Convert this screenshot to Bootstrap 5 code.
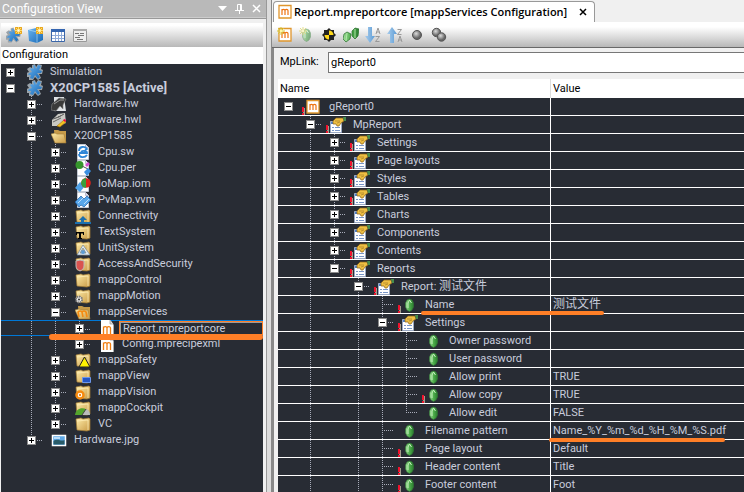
<!DOCTYPE html>
<html lang="en">
<head>
<meta charset="utf-8">
<meta name="viewport" content="width=device-width, initial-scale=1">
<title>Configuration View</title>
<link href="https://cdn.jsdelivr.net/npm/bootstrap@5.3.0/dist/css/bootstrap.min.css" rel="stylesheet">
<style>
:root { --ink: #c8ccdc; --night: #282c34; --mark: #ff7f27; }
body { font: 11px/16px Roboto, "Noto Sans CJK SC", sans-serif; background: #f0f0f0; color: #000; }
svg { display: block; flex: none; }
.side { width: 267px; flex: none; border-right: 1px solid #999; }
.side-title { height: 18px; background: #b9b9b9; border-bottom: 1px solid #ccc; color: #fff; font: 12px/16px Roboto, sans-serif; padding: 0 5px 0 2px; }
.side-title button, .tools button, .tab-close { border: 0; background: none; padding: 0; color: inherit; }
.side-body { border-top: 1px solid #999; padding: 4px 3px 0 1px; }
.tools { height: 24px; flex: none; background: linear-gradient(#fff 10%, #b8b8b8); padding-left: 5px; gap: 6px; }
.side-head { height: 17px; background: #fff; padding-left: 1px; }
.tree { background: var(--night); color: var(--ink); }
.line { height: 16px; display: flex; align-items: center; white-space: nowrap; }
.line b { font-size: 13px; }
.c, .c0 { width: 24px; flex: none; align-self: stretch; display: flex; justify-content: center; align-items: center; }
.side .c0 { width: 18px; }
.grid .c0 { width: 20px; }
.v, .t, .l { --d: repeating-linear-gradient(#a9adba 0 1px, transparent 1px 2px); --h: repeating-linear-gradient(90deg, #a9adba 0 1px, transparent 1px 2px); background-repeat: no-repeat; }
.v { background-image: var(--d); background-size: 1px 100%; background-position: 12px 0; }
.t { background-image: var(--d), var(--h); background-size: 1px 100%, 12px 1px; background-position: 12px 0, 12px 8px; }
.l { background-image: var(--d), var(--h); background-size: 1px 9px, 12px 1px; background-position: 12px 0, 12px 8px; }
.x { width: 9px; height: 9px; padding: 0; border: 1px solid #8c8c8c; border-radius: 0; background: linear-gradient(#000, #000) center/5px 1px no-repeat #fff; }
.x.plus { background: linear-gradient(#000, #000) center/5px 1px no-repeat, linear-gradient(#000, #000) center/1px 5px no-repeat, #fff; }
.f { width: 8px; flex: none; align-self: stretch; padding: 9px 0 0 4px; }
.line > svg { width: 16px; height: 16px; margin-right: 7px; }
.cjk { font-size: 12px; }
.picked { position: relative; border-block: 1px solid #0078d7; }
.picked .name { flex: 1; align-self: stretch; border: 1px solid var(--mark); box-shadow: inset 1px 1px #9a9a9a; margin-left: -3px; padding-left: 3px; line-height: 14px; }
.stroke { position: absolute; background: var(--mark); height: 4px; border-radius: 2px; z-index: 1; }
.stroke-side { left: 48px; right: 0; bottom: -5px; height: 6px; border-radius: 3px; }
.stroke-name { left: 143px; width: 183px; bottom: -2px; }
.stroke-value { left: -2px; width: 176px; bottom: -3px; }
.gutter { width: 5px; flex: none; background: #dcdcdc; border-right: 1px solid #888; }
.tabs { height: 22px; flex: none; padding: 1px 0 0 1px; }
.doc-tab { background: #fff; border: 1px solid #999; border-bottom: 0; border-radius: 4px 4px 0 0; padding: 0 7px 0 4px; font: 600 11px/20px "Open Sans", sans-serif; white-space: nowrap; }
.tab-close { margin-left: 12px; }
.doc-tools { height: 26px; background: linear-gradient(#fff 20%, #b8b8b8); border-bottom: 1px solid #696969; }
.editor { border-left: 2px solid #888; padding-left: 4px; min-height: 0; }
.link-row { height: 31px; padding: 0 0 3px 2px; }
.link-row label { width: 48px; }
.link-row input { height: 21px; border: 1px solid #777; border-right: 0; padding: 0 2px; background: #fff; min-width: 0; outline: 0; }
.grid { width: 100%; table-layout: fixed; border-collapse: separate; border-spacing: 0; color: var(--ink); background: var(--night); }
.grid th { height: 19px; padding: 0 2px; font-weight: 400; color: #000; background: #fff; line-height: 18px; }
.grid td { height: 18px; padding: 0; border-bottom: 1px solid #fff; position: relative; line-height: 17px; white-space: nowrap; }
.grid .line { height: 17px; }
.grid th:first-child { width: 273px; border-right: 1px solid #ddd; }
.grid td:first-child { border-right: 1px solid #fff; }
.grid td + td { padding-left: 2px; }
</style>
<script src="https://cdn.jsdelivr.net/npm/bootstrap@5.3.0/dist/js/bootstrap.bundle.min.js"></script>
</head>
<body class="d-flex vh-100 overflow-hidden">
<svg width="0" height="0" class="position-absolute" aria-hidden="true">
<defs>
<linearGradient id="gold" x2="1" y2="1"><stop stop-color="#ffedab"/><stop offset="1" stop-color="#c99a45"/></linearGradient>
<linearGradient id="blue" x2="1" y2="1"><stop stop-color="#6ab4f0"/><stop offset="1" stop-color="#1667b5"/></linearGradient>
<linearGradient id="leaf" x2="1" y2="0"><stop stop-color="#a6e09f"/><stop offset=".5" stop-color="#4fae4c"/><stop offset="1" stop-color="#2b7d30"/></linearGradient>
<radialGradient id="ball" cx=".4" cy=".35"><stop stop-color="#ddd"/><stop offset="1" stop-color="#666"/></radialGradient>
<linearGradient id="arrow"><stop stop-color="#a9cdec"/><stop offset="1" stop-color="#5b9bd5"/></linearGradient>
</defs>
<symbol id="cfg" viewBox="0 0 16 16"><path d="M5 1l3-1 1 3 2-3 4 1-1 4 2 1-1 4-3 0 2 4-3 2-3-3-2 3-4 0 0-3-4 0 1-4 3-1-2-3 3-2 2 1z" fill="#9aa3aa"/><path d="M6 1.500l2 0 1 3.500 2-4 3 1-2 4 3 1-1 2-4 0 3 4-2 2-3-4-2 4-3-1 1-3-3 0 1-2 3-1-2-3 2-1 2 1z" fill="url(#blue)"/></symbol>
<symbol id="spark" viewBox="0 0 8 8"><path d="M0 0h8v8h-8z" fill="#e9a820"/><path d="M4 0v8M0 4h8M1 1l6 6M7 1L1 7" stroke="#ffe680"/><path d="M3 3h2v2h-2z" fill="#fff"/></symbol>
<symbol id="sparkle" viewBox="0 0 8 8"><path d="M4 0v8M0 4h8M1 1l6 6M7 1L1 7" stroke="#d3c932"/><path d="M3 3h2v2h-2z" fill="#fff9a8"/></symbol>
<symbol id="box" viewBox="0 0 16 16"><path d="M0 3l8-2 7 2v10l-6 3-8-2z" fill="url(#blue)"/><path d="M1 3l8 2v11M9 5l6-2" stroke="#bfe2fb" fill="none" stroke-width=".6"/></symbol>
<symbol id="tbl" viewBox="0 0 16 16"><path d="M1.500 2.500h13v12h-13z" fill="#fff" stroke="#3b66a8"/><path d="M1 2h14v3H1z" fill="#3465b0"/><path d="M2 8.500h12M2 11.500h12M5.500 5v9M8.500 5v9M11.500 5v9" stroke="#8eaad8"/></symbol>
<symbol id="txt" viewBox="0 0 16 16"><path d="M1.500 2.500h13v12h-13z" fill="#eee" stroke="#999"/><path d="M1 2h14v2H1z" fill="#aaa"/><path d="M3 6.500h4M8 6.500h4M6 8.500h6M3 10.500h5M5 12.500h6" stroke="#777"/></symbol>
<symbol id="page" viewBox="0 0 16 16"><path d="M2.500 .5h8l3 3v12h-11z" fill="#fff" stroke="#c4cbd5"/><path d="M10.500 .5v3h3" fill="#dde" stroke="#bbc"/></symbol>
<symbol id="fold" viewBox="0 0 16 16"><path d="M1 3l5-1 2 1 6-1 1 1v11l-3 1-10-1z" fill="url(#gold)" stroke="#a37d35" stroke-width=".7"/><path d="M2 5l11-1v10" fill="none" stroke="#fff0bb" stroke-width=".7"/></symbol>
<symbol id="open" viewBox="0 0 16 16"><path d="M3 2l4 0 2 1 6 0v11H4z" fill="#c79b49"/><path d="M0 6l4-1 2 1 7 0 2 9-11 0z" fill="url(#gold)" stroke="#a37d35" stroke-width=".6"/></symbol>
<symbol id="serv" viewBox="0 0 16 16"><use href="#open"/><path d="M4 13L3 8c2-2 3-1 4 0l1 5M7 8c2-2 3-1 4 0l1 5" fill="none" stroke="#f58a10" stroke-width="1.600"/></symbol>
<symbol id="hw" viewBox="0 0 16 16"><path d="M3 1h10l2 14H3z" fill="#dfe2e5"/><path d="M1 8l7-6 7 1-3 6 0 4-3-3-4 5-5-1z" fill="#3a3a3a" stroke="#888" stroke-width=".6"/><path d="M3 8l6-4 4 0" stroke="#999" fill="none"/></symbol>
<symbol id="hwl" viewBox="0 0 16 16"><path d="M1 8l6-6 7-1 1 10-7 3-7 0z" fill="#c9c9c3"/><path d="M2 7l6-2 5-3M2 10l8-4" stroke="#666"/><path d="M6 14l7-6 2 2-6 5z" fill="#f4c320" stroke="#a8740c" stroke-width=".6"/><path d="M12 8l2-1 1 2-1 1z" fill="#e04"/></symbol>
<symbol id="sw" viewBox="0 0 16 16"><use href="#page"/><path d="M4 7c0-5 6-5 8-2l-2 1M4 9h8c0-2-4-3-6-1M4 10c0 4 6 4 8 1" fill="none" stroke="#2f86d6" stroke-width="1.800"/></symbol>
<symbol id="per" viewBox="0 0 16 16"><use href="#page"/><circle cx="4.500" cy="5" r="4" fill="#35962c"/><path d="M7 6l6 3" stroke="#555"/><path d="M10 5l3-3 2 2-3 3z" fill="#d64bd0"/><path d="M9 12l4-4 3 3-4 5z" fill="#3b8fe0"/></symbol>
<symbol id="iom" viewBox="0 0 16 16"><use href="#page"/><path d="M0 12l5-6 5 4-5 6z" fill="#4fa1e6"/><circle cx="11" cy="7" r="4.800" fill="#d9251c"/><path d="M11 2.200a4.800 4.800 0 0 0 0 9.600z" fill="#37a03b"/></symbol>
<symbol id="pvm" viewBox="0 0 16 16"><use href="#page"/><path d="M0 10l6-6 3 3 3-3 4 4-7 7-3-2-2 2z" fill="#58a7ea" stroke="#1d5fa6" stroke-width=".7"/><path d="M3 11l5-5M9 12l5-5" stroke="#b9dcfa"/></symbol>
<symbol id="con" viewBox="0 0 16 16"><use href="#fold"/><path d="M8 8l4 4H9v2h7v2H0v-2h6v-2H4z" fill="#1c6fae"/></symbol>
<symbol id="tex" viewBox="0 0 16 16"><use href="#fold"/><path d="M1 8h8v3H8V9.500H6V14h1v1H3v-1h1V9.500H2V11H1z" fill="#000"/></symbol>
<symbol id="uni" viewBox="0 0 16 16"><use href="#fold"/><path d="M2 15l6-10 7 10zM5 13h6l-3-5z" fill="#e6edf3" stroke="#71869a" stroke-width=".7"/><circle cx="8" cy="12" r="2" fill="#5b9bd5"/></symbol>
<symbol id="sec" viewBox="0 0 16 16"><use href="#fold"/><path d="M1 5l4-1 4 1v5c0 3-2 4-4 5-2-1-4-2-4-5z" fill="#d9534f" stroke="#bbb"/></symbol>
<symbol id="mot" viewBox="0 0 16 16"><use href="#fold"/><circle cx="4" cy="11.500" r="3" fill="#eee" stroke="#777" stroke-width="2" stroke-dasharray="1.500 .8"/><circle cx="4" cy="11.500" r="1" fill="#333"/></symbol>
<symbol id="saf" viewBox="0 0 16 16"><use href="#fold"/><path d="M9.500 5L15 15H4z" fill="#fff200" stroke="#222"/></symbol>
<symbol id="vie" viewBox="0 0 16 16"><use href="#fold"/><path d="M7.500 9.500h8v5h-8z" fill="#2456c5" stroke="#6d96e8"/></symbol>
<symbol id="vis" viewBox="0 0 16 16"><use href="#fold"/><circle cx="5" cy="11" r="3.500" fill="#fff" stroke="#f58a10" stroke-width="2.500"/><circle cx="5" cy="11" r="1.200" fill="#f58a10"/></symbol>
<symbol id="coc" viewBox="0 0 16 16"><use href="#fold"/><path d="M0 15c1-8 11-9 15-2v2z" fill="#54a52d"/><path d="M7 15l4-6c3 1 4 3 4 6z" fill="#bbb"/><path d="M7 15l4-6" stroke="#444"/></symbol>
<symbol id="jpg" viewBox="0 0 16 16"><path d="M1.500 3.500h13v10h-13z" fill="#5fa9e6" stroke="#fff" stroke-width="1.500"/><path d="M2.500 9c5-3 7 1 11-1v4.500h-11z" fill="#295b68"/><path d="M3 6h6" stroke="#d9efff" stroke-width="1.500"/></symbol>
<symbol id="mdoc" viewBox="0 0 16 16"><path d="M4 1h8l3 4v11H4z" fill="#aaa"/><path d="M2 0h9l3 4v12H2z" fill="#fff"/><path d="M11 0v4h3" fill="#ddd" stroke="#888" stroke-width=".6"/><path d="M4.500 14V6.500M4.500 8c0-1.500 3.500-2 3.500 0v6M8 8c0-1.500 3.500-2 3.500 0v6" fill="none" stroke="#f07d10" stroke-width="1.300"/></symbol>
<symbol id="m" viewBox="0 0 16 16"><path d="M1 1.500h12v12.500H1z" fill="#fff" stroke="#e0962d" stroke-width="1.300"/><path d="M4 11V5M4 6.500c0-1.500 3-1.500 3 0V11M7 6.500c0-1.500 3-1.500 3 0V11" fill="none" stroke="#ee7411" stroke-width="1.200"/></symbol>
<symbol id="prop" viewBox="0 0 16 16"><path d="M.5 4.500h11v11H.5z" fill="#fff" stroke="#9aa9c4"/><path d="M1 5h4v2H1z" fill="#4d80cc"/><path d="M2 10.500h2M5 10.500h5M2 13.500h2M5 13.500h5" stroke="#7896c8"/><path d="M3 4l3-3 7 0 1 3-3 2-2 3-2 0-1-2-3 0z" fill="#eebf43" stroke="#876019" stroke-width=".7"/><path d="M5 4h5M7 6l3-1" stroke="#9b7222" stroke-width=".6"/><path d="M13 0h3v4h-2z" fill="#468c4e"/></symbol>
<symbol id="gem" viewBox="0 0 16 16"><path d="M7.500 2l2.500 1 1.500 3v4L10 13l-2.500 1.500L5 13 3.500 10V6L5 3z" fill="url(#leaf)" stroke="#2f7a33" stroke-width=".6"/><path d="M7.500 3L6 6v5M7.500 3l2 3" stroke="#c6f0bf" fill="none"/></symbol>
<symbol id="bang" viewBox="0 0 3 8"><path d="M1 1h2v7H1z" fill="#a59a8a"/><path d="M0 0h2v5H0zM0 6h2v2H0z" fill="#f0122d"/></symbol>
<symbol id="quad" viewBox="0 0 16 16"><path d="M8 1l2 2 3 0 0 3 2 2-2 2 0 3-3 0-2 2-2-2-3 0 0-3-2-2 2-2 0-3 3 0z" fill="#222"/><path d="M8 8V3.500A4.500 4.500 0 0 1 12.500 8zM8 8v4.500A4.500 4.500 0 0 1 3.500 8z" fill="#ffd91a"/></symbol>
<symbol id="gems" viewBox="0 0 16 16"><path d="M4 5l4 2-1 5-4 3-3-3 1-5zM12 1l4 1-1 7-3 3-3-3 0-5z" fill="url(#leaf)" stroke="#276f2b" stroke-width=".7"/><path d="M4 6l-1 8M12 2v9" stroke="#b2e6aa"/></symbol>
<symbol id="sort" viewBox="0 0 16 16"><path d="M3 0h4v9h3l-5 7-5-7h3z" fill="url(#arrow)"/></symbol>
<symbol id="orb" viewBox="0 0 16 16"><circle cx="8" cy="8" r="4.500" fill="url(#ball)" stroke="#555"/></symbol>
<symbol id="orbs" viewBox="0 0 16 16"><circle cx="5.500" cy="5.500" r="4.200" fill="url(#ball)" stroke="#555"/><circle cx="10.500" cy="10" r="4.200" fill="url(#ball)" stroke="#555"/></symbol>
</svg>

<aside class="side d-flex flex-column">
  <div class="side-title d-flex align-items-center">
    <span class="me-auto">Configuration View</span>
    <button class="me-2" aria-label="Menu"><svg width="9" height="5"><path d="M0 0h9L4.500 5z" fill="#fff"/></svg></button>
    <button class="me-2" aria-label="Pin"><svg width="9" height="10"><path d="M2.500 6V.5h4V6M5.500 1v5M0 6.500h9M4.500 7v3" fill="none" stroke="#fff"/></svg></button>
    <button aria-label="Close"><svg width="9" height="9"><path d="M1 1l7 7M8 1L1 8" stroke="#fff" stroke-width="1.500"/></svg></button>
  </div>
  <div class="side-body flex-fill d-flex flex-column">
    <div class="tools d-flex align-items-center">
      <button aria-label="Add configuration"><svg width="16" height="16"><use href="#cfg" width="15" height="16"/><use href="#spark" x="9" width="7" height="7"/></svg></button>
      <button aria-label="Add object"><svg width="16" height="16"><use href="#box" width="16" height="16"/><use href="#spark" x="8" width="7" height="7"/></svg></button>
      <button aria-label="Table view"><svg width="16" height="16"><use href="#tbl" width="16" height="16"/></svg></button>
      <button aria-label="Text view"><svg width="16" height="16"><use href="#txt" width="16" height="16"/></svg></button>
    </div>
    <div class="side-head">Configuration</div>
    <div class="tree flex-fill">
      <div class="line"><span class="c0"><button class="x plus" aria-label="Expand"></button></span><span class="f"></span><svg><use href="#cfg"/></svg><span>Simulation</span></div>
      <div class="line"><span class="c0"><button class="x" aria-label="Collapse"></button></span><span class="f"></span><svg><use href="#cfg"/></svg><b>X20CP1585 [Active]</b></div>
      <div class="line"><span class="c0"></span><span class="c t"><button class="x plus" aria-label="Expand"></button></span><span class="f"></span><svg><use href="#hw"/></svg><span>Hardware.hw</span></div>
      <div class="line"><span class="c0"></span><span class="c t"><button class="x plus" aria-label="Expand"></button></span><span class="f"></span><svg><use href="#hwl"/></svg><span>Hardware.hwl</span></div>
      <div class="line"><span class="c0"></span><span class="c t"><button class="x" aria-label="Collapse"></button></span><span class="f"></span><svg><use href="#open"/></svg><span>X20CP1585</span></div>
      <div class="line"><span class="c0"></span><span class="c v"></span><span class="c t"><button class="x plus" aria-label="Expand"></button></span><span class="f"></span><svg><use href="#sw"/></svg><span>Cpu.sw</span></div>
      <div class="line"><span class="c0"></span><span class="c v"></span><span class="c t"><button class="x plus" aria-label="Expand"></button></span><span class="f"></span><svg><use href="#per"/></svg><span>Cpu.per</span></div>
      <div class="line"><span class="c0"></span><span class="c v"></span><span class="c t"><button class="x plus" aria-label="Expand"></button></span><span class="f"></span><svg><use href="#iom"/></svg><span>IoMap.iom</span></div>
      <div class="line"><span class="c0"></span><span class="c v"></span><span class="c t"><button class="x plus" aria-label="Expand"></button></span><span class="f"></span><svg><use href="#pvm"/></svg><span>PvMap.vvm</span></div>
      <div class="line"><span class="c0"></span><span class="c v"></span><span class="c t"><button class="x plus" aria-label="Expand"></button></span><span class="f"></span><svg><use href="#con"/></svg><span>Connectivity</span></div>
      <div class="line"><span class="c0"></span><span class="c v"></span><span class="c t"><button class="x plus" aria-label="Expand"></button></span><span class="f"></span><svg><use href="#tex"/></svg><span>TextSystem</span></div>
      <div class="line"><span class="c0"></span><span class="c v"></span><span class="c t"><button class="x plus" aria-label="Expand"></button></span><span class="f"></span><svg><use href="#uni"/></svg><span>UnitSystem</span></div>
      <div class="line"><span class="c0"></span><span class="c v"></span><span class="c t"><button class="x plus" aria-label="Expand"></button></span><span class="f"></span><svg><use href="#sec"/></svg><span>AccessAndSecurity</span></div>
      <div class="line"><span class="c0"></span><span class="c v"></span><span class="c t"><button class="x plus" aria-label="Expand"></button></span><span class="f"></span><svg><use href="#fold"/></svg><span>mappControl</span></div>
      <div class="line"><span class="c0"></span><span class="c v"></span><span class="c t"><button class="x plus" aria-label="Expand"></button></span><span class="f"></span><svg><use href="#mot"/></svg><span>mappMotion</span></div>
      <div class="line"><span class="c0"></span><span class="c v"></span><span class="c t"><button class="x" aria-label="Collapse"></button></span><span class="f"></span><svg><use href="#serv"/></svg><span>mappServices</span></div>
      <div class="line picked"><span class="c0"></span><span class="c v"></span><span class="c v"></span><span class="c t"><button class="x plus" aria-label="Expand"></button></span><span class="f"></span><svg><use href="#mdoc"/></svg><span class="name">Report.mpreportcore</span><span class="stroke stroke-side"></span></div>
      <div class="line"><span class="c0"></span><span class="c v"></span><span class="c v"></span><span class="c l"><button class="x plus" aria-label="Expand"></button></span><span class="f"></span><svg><use href="#mdoc"/></svg><span>Config.mprecipexml</span></div>
      <div class="line"><span class="c0"></span><span class="c v"></span><span class="c t"><button class="x plus" aria-label="Expand"></button></span><span class="f"></span><svg><use href="#saf"/></svg><span>mappSafety</span></div>
      <div class="line"><span class="c0"></span><span class="c v"></span><span class="c t"><button class="x plus" aria-label="Expand"></button></span><span class="f"></span><svg><use href="#vie"/></svg><span>mappView</span></div>
      <div class="line"><span class="c0"></span><span class="c v"></span><span class="c t"><button class="x plus" aria-label="Expand"></button></span><span class="f"></span><svg><use href="#vis"/></svg><span>mappVision</span></div>
      <div class="line"><span class="c0"></span><span class="c v"></span><span class="c t"><button class="x plus" aria-label="Expand"></button></span><span class="f"></span><svg><use href="#coc"/></svg><span>mappCockpit</span></div>
      <div class="line"><span class="c0"></span><span class="c v"></span><span class="c l"><button class="x plus" aria-label="Expand"></button></span><span class="f"></span><svg><use href="#fold"/></svg><span>VC</span></div>
      <div class="line"><span class="c0"></span><span class="c l"><button class="x plus" aria-label="Expand"></button></span><span class="f"></span><svg><use href="#jpg"/></svg><span>Hardware.jpg</span></div>
    </div>
  </div>
</aside>
<div class="gutter"></div>

<main class="flex-fill d-flex flex-column overflow-hidden">
  <div class="tabs d-flex">
    <div class="doc-tab d-flex align-items-center">
      <svg width="16" height="16"><use href="#m"/></svg><span>Report.mpreportcore [mappServices Configuration]</span>
      <button class="tab-close" aria-label="Close tab"><svg width="8" height="8"><path d="M1 1l6 6M7 1L1 7" stroke="#000" stroke-width="1.500"/></svg></button>
    </div>
  </div>
  <div class="doc-tools tools d-flex align-items-center">
    <button aria-label="New component"><svg width="16" height="16"><use href="#m" x="1" width="16" height="16"/><use href="#sparkle" width="8" height="8"/></svg></button>
    <button aria-label="New element"><svg width="16" height="16" opacity=".55"><use href="#gem"/><use href="#sparkle" width="8" height="8"/></svg></button>
    <button aria-label="Select target"><svg width="16" height="16"><use href="#quad"/></svg></button>
    <button aria-label="Show elements"><svg width="16" height="16"><use href="#gems"/></svg></button>
    <button aria-label="Sort ascending"><svg width="16" height="16"><use href="#sort" width="16" height="16"/><path d="M11 7l2-6 2 6M11.500 5h3M10.500 9.500h4l-4 5h4" fill="none" stroke="#999"/></svg></button>
    <button aria-label="Sort descending"><svg width="16" height="16"><use href="#sort" width="16" height="16" transform="matrix(1 0 0 -1 0 16)"/><path d="M11 15l2-6 2 6M11.500 13h3M10.500 2.500h4l-4 5h4" fill="none" stroke="#999"/></svg></button>
    <button aria-label="Show one"><svg width="16" height="16"><use href="#orb"/></svg></button>
    <button aria-label="Show all"><svg width="16" height="16"><use href="#orbs"/></svg></button>
  </div>
  <div class="editor flex-fill">
    <div class="link-row d-flex align-items-center">
      <label for="mplink">MpLink:</label>
      <input id="mplink" class="flex-fill" type="text" value="gReport0">
    </div>
    <table class="grid">
      <thead><tr><th>Name</th><th>Value</th></tr></thead>
      <tbody>
      <tr><td><div class="line"><span class="c0"><button class="x" aria-label="Collapse"></button></span><span class="f"><svg width="3" height="8"><use href="#bang"/></svg></span><svg><use href="#m"/></svg><span>gReport0</span></div></td><td></td></tr>
      <tr><td><div class="line"><span class="c0"></span><span class="c t"><button class="x" aria-label="Collapse"></button></span><span class="f"><svg width="3" height="8"><use href="#bang"/></svg></span><svg><use href="#prop"/></svg><span>MpReport</span></div></td><td></td></tr>
      <tr><td><div class="line"><span class="c0"></span><span class="c v"></span><span class="c t"><button class="x plus" aria-label="Expand"></button></span><span class="f"><svg width="3" height="8"><use href="#bang"/></svg></span><svg><use href="#prop"/></svg><span>Settings</span></div></td><td></td></tr>
      <tr><td><div class="line"><span class="c0"></span><span class="c v"></span><span class="c t"><button class="x plus" aria-label="Expand"></button></span><span class="f"><svg width="3" height="8"><use href="#bang"/></svg></span><svg><use href="#prop"/></svg><span>Page layouts</span></div></td><td></td></tr>
      <tr><td><div class="line"><span class="c0"></span><span class="c v"></span><span class="c t"><button class="x plus" aria-label="Expand"></button></span><span class="f"><svg width="3" height="8"><use href="#bang"/></svg></span><svg><use href="#prop"/></svg><span>Styles</span></div></td><td></td></tr>
      <tr><td><div class="line"><span class="c0"></span><span class="c v"></span><span class="c t"><button class="x plus" aria-label="Expand"></button></span><span class="f"><svg width="3" height="8"><use href="#bang"/></svg></span><svg><use href="#prop"/></svg><span>Tables</span></div></td><td></td></tr>
      <tr><td><div class="line"><span class="c0"></span><span class="c v"></span><span class="c t"><button class="x plus" aria-label="Expand"></button></span><span class="f"></span><svg><use href="#prop"/></svg><span>Charts</span></div></td><td></td></tr>
      <tr><td><div class="line"><span class="c0"></span><span class="c v"></span><span class="c t"><button class="x plus" aria-label="Expand"></button></span><span class="f"></span><svg><use href="#prop"/></svg><span>Components</span></div></td><td></td></tr>
      <tr><td><div class="line"><span class="c0"></span><span class="c v"></span><span class="c t"><button class="x plus" aria-label="Expand"></button></span><span class="f"><svg width="3" height="8"><use href="#bang"/></svg></span><svg><use href="#prop"/></svg><span>Contents</span></div></td><td></td></tr>
      <tr><td><div class="line"><span class="c0"></span><span class="c v"></span><span class="c l"><button class="x" aria-label="Collapse"></button></span><span class="f"><svg width="3" height="8"><use href="#bang"/></svg></span><svg><use href="#prop"/></svg><span>Reports</span></div></td><td></td></tr>
      <tr><td><div class="line"><span class="c0"></span><span class="c v"></span><span class="c"></span><span class="c t"><button class="x" aria-label="Collapse"></button></span><span class="f"><svg width="3" height="8"><use href="#bang"/></svg></span><svg><use href="#prop"/></svg><span>Report: <span class="cjk">测试文件</span></span></div></td><td></td></tr>
      <tr><td><div class="line"><span class="c0"></span><span class="c v"></span><span class="c"></span><span class="c v"></span><span class="c t"></span><span class="f"><svg width="3" height="8"><use href="#bang"/></svg></span><svg><use href="#gem"/></svg><span>Name</span></div><span class="stroke stroke-name"></span></td><td class="cjk">测试文件</td></tr>
      <tr><td><div class="line"><span class="c0"></span><span class="c v"></span><span class="c"></span><span class="c v"></span><span class="c t"><button class="x" aria-label="Collapse"></button></span><span class="f"><svg width="3" height="8"><use href="#bang"/></svg></span><svg><use href="#prop"/></svg><span>Settings</span></div></td><td></td></tr>
      <tr><td><div class="line"><span class="c0"></span><span class="c v"></span><span class="c"></span><span class="c v"></span><span class="c v"></span><span class="c t"></span><span class="f"></span><svg><use href="#gem"/></svg><span>Owner password</span></div></td><td></td></tr>
      <tr><td><div class="line"><span class="c0"></span><span class="c v"></span><span class="c"></span><span class="c v"></span><span class="c v"></span><span class="c t"></span><span class="f"></span><svg><use href="#gem"/></svg><span>User password</span></div></td><td></td></tr>
      <tr><td><div class="line"><span class="c0"></span><span class="c v"></span><span class="c"></span><span class="c v"></span><span class="c v"></span><span class="c t"></span><span class="f"></span><svg><use href="#gem"/></svg><span>Allow print</span></div></td><td>TRUE</td></tr>
      <tr><td><div class="line"><span class="c0"></span><span class="c v"></span><span class="c"></span><span class="c v"></span><span class="c v"></span><span class="c t"></span><span class="f"><svg width="3" height="8"><use href="#bang"/></svg></span><svg><use href="#gem"/></svg><span>Allow copy</span></div></td><td>TRUE</td></tr>
      <tr><td><div class="line"><span class="c0"></span><span class="c v"></span><span class="c"></span><span class="c v"></span><span class="c v"></span><span class="c l"></span><span class="f"></span><svg><use href="#gem"/></svg><span>Allow edit</span></div></td><td>FALSE</td></tr>
      <tr><td><div class="line"><span class="c0"></span><span class="c v"></span><span class="c"></span><span class="c v"></span><span class="c t"></span><span class="f"></span><svg><use href="#gem"/></svg><span>Filename pattern</span></div></td><td>Name_%Y_%m_%d_%H_%M_%S.pdf<span class="stroke stroke-value"></span></td></tr>
      <tr><td><div class="line"><span class="c0"></span><span class="c v"></span><span class="c"></span><span class="c v"></span><span class="c t"></span><span class="f"><svg width="3" height="8"><use href="#bang"/></svg></span><svg><use href="#gem"/></svg><span>Page layout</span></div></td><td>Default</td></tr>
      <tr><td><div class="line"><span class="c0"></span><span class="c v"></span><span class="c"></span><span class="c v"></span><span class="c t"></span><span class="f"><svg width="3" height="8"><use href="#bang"/></svg></span><svg><use href="#gem"/></svg><span>Header content</span></div></td><td>Title</td></tr>
      <tr><td><div class="line"><span class="c0"></span><span class="c v"></span><span class="c"></span><span class="c v"></span><span class="c t"></span><span class="f"><svg width="3" height="8"><use href="#bang"/></svg></span><svg><use href="#gem"/></svg><span>Footer content</span></div></td><td>Foot</td></tr>
      </tbody>
    </table>
  </div>
</main>
</body>
</html>
